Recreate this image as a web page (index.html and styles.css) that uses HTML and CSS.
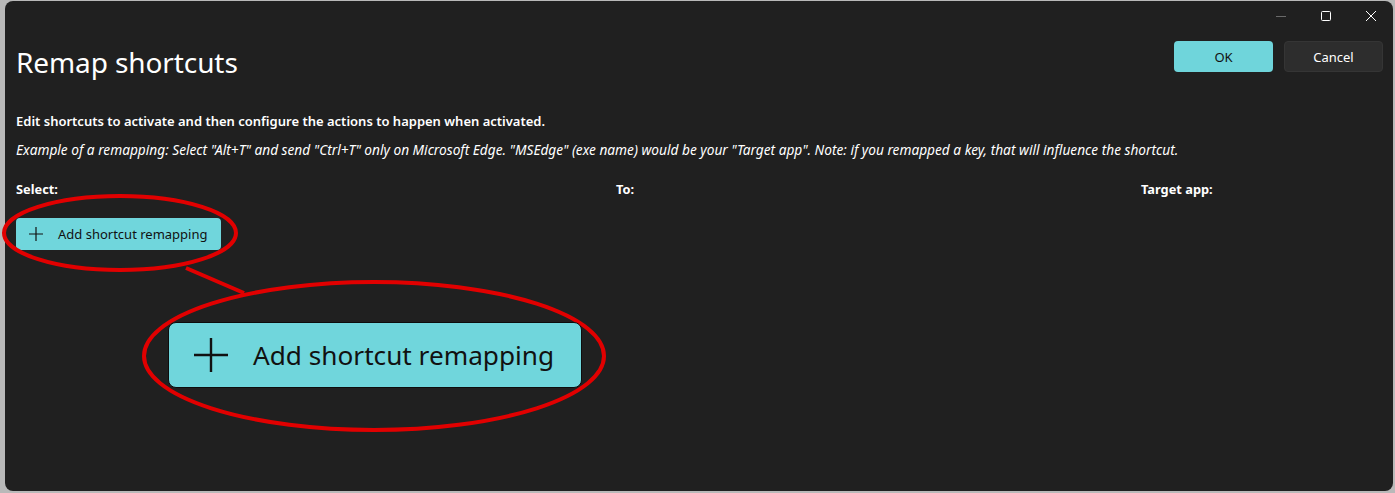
FILE: index.html
```html
<!DOCTYPE html>
<html>
	<head>
		<meta charset="UTF-8">
		<title>Remap shortcuts</title>
		<link rel="stylesheet" href="styles.css">
	</head>
	<body>
		<div class="window">
			<div class="caption">
				<span class="cap-btn cap-min">
					<svg width="12" height="12" viewBox="0 0 12 12"><path d="M1 6.5h10" stroke="#6a6a6a" stroke-width="1"/></svg>
				</span>
				<span class="cap-btn">
					<svg width="12" height="12" viewBox="0 0 12 12"><rect x="1.5" y="1.5" width="9" height="9" rx="1" fill="none" stroke="#fff" stroke-width="1"/></svg>
				</span>
				<span class="cap-btn">
					<svg width="12" height="12" viewBox="0 0 12 12"><path d="M1 1L11 11M11 1L1 11" stroke="#fff" stroke-width="1"/></svg>
				</span>
			</div>
			<div class="header">
				<h1 class="title">Remap shortcuts</h1>
				<div class="actions">
					<button class="btn btn-accent">OK</button>
					<button class="btn btn-plain">Cancel</button>
				</div>
			</div>
			<p class="lead">Edit shortcuts to activate and then configure the actions to happen when activated.</p>
			<p class="example">Example of a remapping: Select "Alt+T" and send "Ctrl+T" only on Microsoft Edge. "MSEdge" (exe name) would be your "Target app". Note: if you remapped a key, that will influence the shortcut.</p>
			<div class="cols">
				<span class="col col-select">Select:</span>
				<span class="col col-to">To:</span>
				<span class="col col-app">Target app:</span>
			</div>
			<button class="btn-add">
				<svg width="16" height="16" viewBox="0 0 16 16"><path d="M8 1v14M1 8h14" stroke="#111" stroke-width="1.2"/></svg>
				<span>Add shortcut remapping</span>
			</button>

			<!-- annotation over the page -->
			<svg class="marks" width="1395" height="493" viewBox="0 0 1395 493">
				<ellipse cx="120" cy="233" rx="116" ry="37" fill="none" stroke="#e10000" stroke-width="4"/>
				<path d="M186 268L244 293" stroke="#e10000" stroke-width="4"/>
				<ellipse cx="374" cy="356" rx="230" ry="74" fill="none" stroke="#e10000" stroke-width="4"/>
			</svg>
			<div class="zoomed">
				<svg width="36" height="36" viewBox="0 0 36 36"><path d="M18 1v34M1 18h34" stroke="#111" stroke-width="2.4"/></svg>
				<span>Add shortcut remapping</span>
			</div>
		</div>
	</body>
</html>
```

FILE: styles.css
```css
html, body {
	margin: 0;
	height: 100%;
}
body {
	background: #b9b9b9;
	font-family: "Noto Sans", "Open Sans", sans-serif;
	padding: 1px 2px 2px 5px;
	box-sizing: border-box;
}
.window {
	position: relative;
	height: 490px;
	background: #202020;
	border-radius: 8px;
	color: #fff;
	box-sizing: border-box;
	padding: 0 10px 0 11px;
}
.caption {
	display: flex;
	justify-content: flex-end;
	height: 30px;
	margin-right: -10px;
}
.cap-btn {
	width: 45px;
	height: 30px;
	display: flex;
	align-items: center;
	justify-content: center;
}
.header {
	display: flex;
	justify-content: space-between;
	align-items: flex-start;
	height: 70px;
}
.title {
	margin: 12px 0 0;
	font-weight: 400;
	font-size: 28px;
	letter-spacing: -0.1px;
}
.actions {
	display: flex;
	gap: 11px;
	margin-top: 10px;
}
.btn {
	width: 99px;
	height: 31px;
	border-radius: 4px;
	border: none;
	font-family: inherit;
	font-size: 13px;
}
.btn-accent {
	background: #6fd5db;
	color: #111;
}
.btn-plain {
	background: #2d2d2d;
	color: #fff;
	border: 1px solid #353535;
}
.lead {
	margin: 11px 0 0;
	font-size: 13px;
	font-weight: 600;
}
.example {
	margin: 10px 0 0;
	font-size: 13.7px;
	font-style: italic;
}
.cols {
	display: flex;
	margin-top: 21px;
	font-size: 12.8px;
	font-weight: 700;
}
.col-select { width: 600px; }
.col-to { width: 525px; }
.btn-add {
	display: flex;
	align-items: center;
	gap: 14px;
	margin-top: 20px;
	width: 205px;
	height: 32px;
	padding: 0 12px;
	background: #70d6dc;
	border: none;
	border-radius: 4px;
	color: #111;
	font-family: inherit;
	font-size: 13px;
}
.marks {
	position: absolute;
	left: -5px;
	top: -1px;
	pointer-events: none;
}
.zoomed {
	position: absolute;
	left: 163px;
	top: 321px;
	width: 414px;
	height: 66px;
	box-sizing: border-box;
	padding: 0 22px 0 24px;
	display: flex;
	align-items: center;
	gap: 24px;
	background: #70d6dc;
	border: 1px solid #0d0d0d;
	border-radius: 8px;
	color: #111;
	font-size: 26.2px;
}
```
